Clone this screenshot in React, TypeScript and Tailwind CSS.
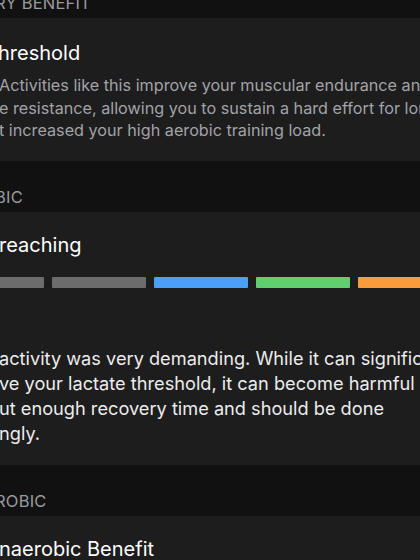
import React from "react";

const font = { fontFamily: "Inter, 'Noto Sans', sans-serif" };

function SectionHeader({ label }: { label: string }) {
  return (
    <div className="h-[51px] bg-[#111111] flex items-end pb-[5px]">
      <span className="-ml-[5px] whitespace-nowrap text-[16.5px] leading-[20px] tracking-[0.2px] text-[#9a9a9e]">
        {label}
      </span>
    </div>
  );
}

function Lines({ lines, className }: { lines: string[]; className: string }) {
  return (
    <div className={className}>
      {lines.map((l, i) => (
        <div key={i} className="-ml-[1px] whitespace-nowrap">
          {l}
        </div>
      ))}
    </div>
  );
}

const zones = ["#6c6c6c", "#6c6c6c", "#4a9ff6", "#5fcf70", "#fa9c3c", "#f2545b"];

export default function App() {
  return (
    <div className="w-[420px] h-[560px] overflow-hidden bg-[#111111]" style={font}>
      <div className="-mt-[33px] flex flex-col">
        <SectionHeader label="RY BENEFIT" />

        <div className="bg-[#1d1d1d] h-[143px] pt-[22px]">
          <div className="-ml-[2px] whitespace-nowrap text-[20px] leading-[26px] text-white">hreshold</div>
          <Lines
            className="mt-[8px] text-[16.2px] leading-[22.6px] text-[#a3a3a7]"
            lines={[
              "Activities like this improve your muscular endurance and",
              "e resistance, allowing you to sustain a hard effort for longer.",
              "t increased your high aerobic training load.",
            ]}
          />
        </div>

        <SectionHeader label="BIC" />

        <div className="bg-[#1d1d1d] h-[253px] pt-[20px]">
          <div className="-ml-[1px] whitespace-nowrap text-[20px] leading-[26px] text-white">reaching</div>
          <div className="mt-[19px] -ml-[50px] flex gap-[8px]">
            {zones.map((c, i) => (
              <div key={i} className="h-[11px] w-[94px] shrink-0 rounded-[1px]" style={{ backgroundColor: c }} />
            ))}
          </div>
          <Lines
            className="mt-[58px] text-[18.2px] leading-[25px] text-[#ececec]"
            lines={[
              "activity was very demanding. While it can significantly",
              "ve your lactate threshold, it can become harmful",
              "ut enough recovery time and should be done",
              "ngly.",
            ]}
          />
        </div>

        <SectionHeader label="ROBIC" />

        <div className="bg-[#1d1d1d] h-[120px] pt-[20px]">
          <div className="-ml-[1px] whitespace-nowrap text-[20px] leading-[26px] text-white">naerobic Benefit</div>
        </div>
      </div>
    </div>
  );
}
